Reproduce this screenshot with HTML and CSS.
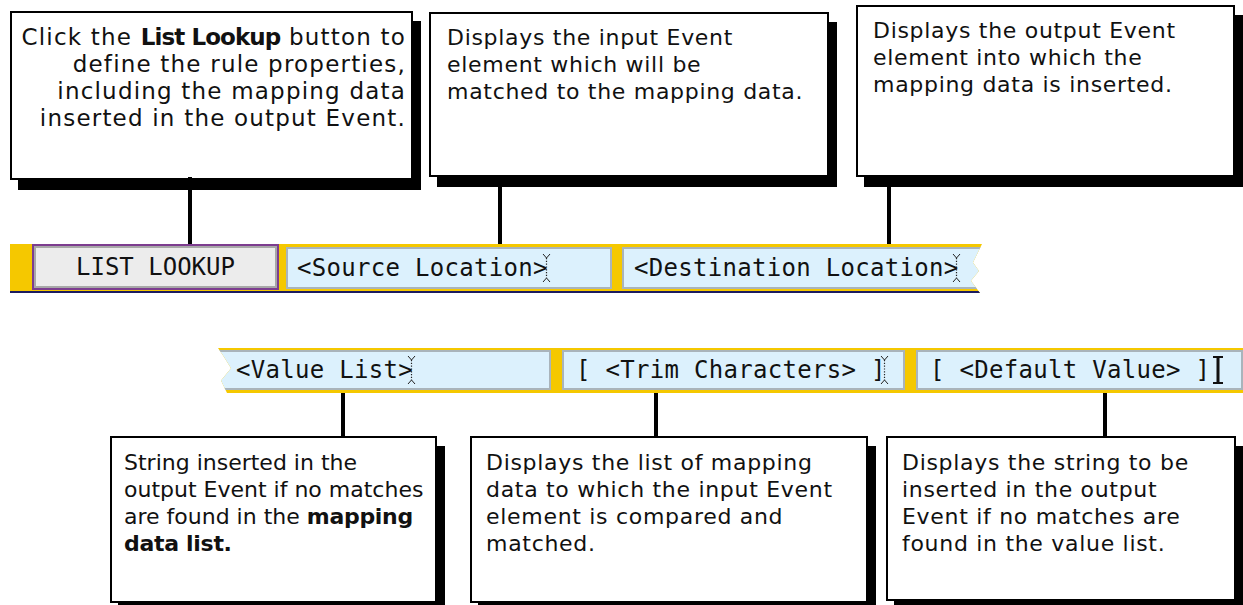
FILE: index.html
```html
<!DOCTYPE html>
<html>
  <head>
    <title>List Lookup Rule</title>
    <link rel="stylesheet" href="styles.css">
  </head>
  <body>
    <div class="callouts callouts-top">
      <div class="callout c1">Click the <b>List Lookup</b> button to<br>define the rule properties,<br>including the mapping data<br>inserted in the output Event.</div>
      <div class="callout c2">Displays the input Event<br>element which will be<br>matched to the mapping data.</div>
      <div class="callout c3">Displays the output Event<br>element into which the<br>mapping data is inserted.</div>
    </div>

    <div class="leaders leaders-top">
      <span class="leader lt1"></span>
      <span class="leader lt2"></span>
      <span class="leader lt3"></span>
    </div>

    <div class="bar bar-top">
      <div class="rule-button">LIST LOOKUP</div>
      <div class="field f-source">&lt;Source Location&gt;<svg class="caret" width="9" height="30" viewBox="0 0 9 30"><path d="M1 1l3.5 4 3.5-4M1 29l3.5-4 3.5 4" fill="none" stroke="#222" stroke-width="1"/><line x1="4.5" y1="5" x2="4.5" y2="25" stroke="#222" stroke-width="1.2" stroke-dasharray="1.2 1.6"/></svg></div>
      <div class="field f-dest">&lt;Destination Location&gt;<svg class="caret" width="9" height="30" viewBox="0 0 9 30"><path d="M1 1l3.5 4 3.5-4M1 29l3.5-4 3.5 4" fill="none" stroke="#222" stroke-width="1"/><line x1="4.5" y1="5" x2="4.5" y2="25" stroke="#222" stroke-width="1.2" stroke-dasharray="1.2 1.6"/></svg></div>
    </div>

    <div class="bar bar-bottom">
      <div class="field f-values">&lt;Value List&gt;<svg class="caret" width="9" height="30" viewBox="0 0 9 30"><path d="M1 1l3.5 4 3.5-4M1 29l3.5-4 3.5 4" fill="none" stroke="#222" stroke-width="1"/><line x1="4.5" y1="5" x2="4.5" y2="25" stroke="#222" stroke-width="1.2" stroke-dasharray="1.2 1.6"/></svg></div>
      <div class="field f-trim">[ &lt;Trim Characters&gt; ]<svg class="caret" width="9" height="30" viewBox="0 0 9 30"><path d="M1 1l3.5 4 3.5-4M1 29l3.5-4 3.5 4" fill="none" stroke="#222" stroke-width="1"/><line x1="4.5" y1="5" x2="4.5" y2="25" stroke="#222" stroke-width="1.2" stroke-dasharray="1.2 1.6"/></svg></div>
      <div class="field f-default">[ &lt;Default Value&gt; ]<svg class="ibeam" width="12" height="30" viewBox="0 0 12 30"><path d="M1 2h10M1 28h10" stroke="#111" stroke-width="2"/><path d="M6 2v26" stroke="#111" stroke-width="3"/></svg></div>
    </div>

    <div class="leaders leaders-bottom">
      <span class="leader lb1"></span>
      <span class="leader lb2"></span>
      <span class="leader lb3"></span>
    </div>

    <div class="callouts callouts-bottom">
      <div class="callout c4">String inserted in the<br>output Event if no matches<br>are found in the <b>mapping</b><br><b>data list.</b></div>
      <div class="callout c5">Displays the list of mapping<br>data to which the input Event<br>element is compared and<br>matched.</div>
      <div class="callout c6">Displays the string to be<br>inserted in the output<br>Event if no matches are<br>found in the value list.</div>
    </div>
  </body>
</html>
```

FILE: styles.css
```css
body {
  margin: 0;
  width: 1243px;
  height: 605px;
  overflow: hidden;
  background: #fff;
  font-family: "DejaVu Sans", "Open Sans", sans-serif;
  color: #111;
}

/* callout boxes */
.callouts {
  display: flex;
  align-items: flex-start;
}
.callouts-top {
  height: 177px;
}
.callouts-bottom {
  height: 169px;
}
.callout {
  box-sizing: border-box;
  border: 2px solid #000;
  background: #fff;
  box-shadow: 8px 10px 0 #000;
  font-size: 22px;
  line-height: 27px;
  letter-spacing: 0.7px;
  white-space: nowrap;
  flex-shrink: 0;
}
.callout b {
  font-weight: 700;
  letter-spacing: -0.3px;
}
.c1 {
  margin: 11px 0 0 10px;
  width: 403px;
  height: 169px;
  padding: 11px 5px 0 0;
  text-align: right;
  font-size: 23px;
  letter-spacing: 1.2px;
}
.c1 b {
  letter-spacing: -0.9px;
}
.c2 {
  margin: 12px 0 0 16px;
  width: 400px;
  height: 165px;
  padding: 10px 0 0 16px;
}
.c3 {
  margin: 5px 0 0 27px;
  width: 379px;
  height: 172px;
  padding: 10px 0 0 15px;
}
.c4 {
  margin-left: 110px;
  width: 327px;
  height: 167px;
  padding: 11px 0 0 12px;
  letter-spacing: 0;
}
.c5 {
  margin-left: 33px;
  width: 398px;
  height: 167px;
  padding: 11px 0 0 14px;
}
.c6 {
  margin-left: 18px;
  width: 350px;
  height: 165px;
  padding: 11px 0 0 14px;
}

/* leader lines */
.leaders {
  display: flex;
}
.leaders-top {
  height: 67px;
}
.leaders-bottom {
  height: 43px;
}
.leader {
  width: 4px;
  background: #000;
  flex-shrink: 0;
}
.lt1 { margin-left: 188px; }
.lt2 { margin-left: 306px; }
.lt3 { margin-left: 385px; }
.lb1 { margin-left: 341px; }
.lb2 { margin-left: 309px; }
.lb3 { margin-left: 445px; }

/* rule bars */
.bar {
  display: flex;
  align-items: flex-start;
  box-sizing: border-box;
  background: #f5c800;
  font-family: "DejaVu Sans Mono", monospace;
  font-size: 24px;
}
.bar-top {
  margin-left: 10px;
  width: 972px;
  height: 49px;
  padding-left: 22px;
  border-bottom: 2px solid #1b1b5e;
  clip-path: polygon(0 0, 100% 0, calc(100% - 9px) 38%, calc(100% - 3px) 55%, calc(100% - 11px) 75%, calc(100% - 2px) 100%, 0 100%);
}
.bar-bottom {
  margin: 55px 0 0 218px;
  width: 1025px;
  height: 45px;
  padding-top: 2px;
  clip-path: polygon(0 0, 100% 0, 100% 100%, 9px 100%, 3px 72%, 13px 45%, 6px 20%);
}
.rule-button {
  box-sizing: border-box;
  width: 247px;
  height: 46px;
  border: 2px solid #7d3d8f;
  box-shadow: inset 0 0 0 2px #a8a8a8;
  background: #ececec;
  display: flex;
  align-items: center;
  justify-content: center;
  color: #111;
}
.field {
  box-sizing: border-box;
  height: 42px;
  margin-top: 3px;
  border: 2px solid #a9b4bb;
  background: #dcf1fd;
  display: flex;
  align-items: center;
  padding-left: 9px;
  color: #111;
  white-space: nowrap;
  flex-shrink: 0;
  letter-spacing: 0.3px;
}
.f-source {
  margin-left: 7px;
  width: 326px;
}
.f-dest {
  margin-left: 10px;
  flex: 1;
  padding-left: 10px;
}
.bar-bottom .field {
  height: 40px;
  margin-top: 0;
}
.f-values {
  width: 333px;
  padding-left: 18px;
  border-left: none;
}
.f-trim {
  margin-left: 11px;
  width: 343px;
  padding-left: 12px;
}
.f-default {
  margin-left: 11px;
  flex: 1;
  padding-left: 12px;
}
.caret {
  margin-left: -6px;
}
.ibeam {
  margin-left: 2px;
}
```
